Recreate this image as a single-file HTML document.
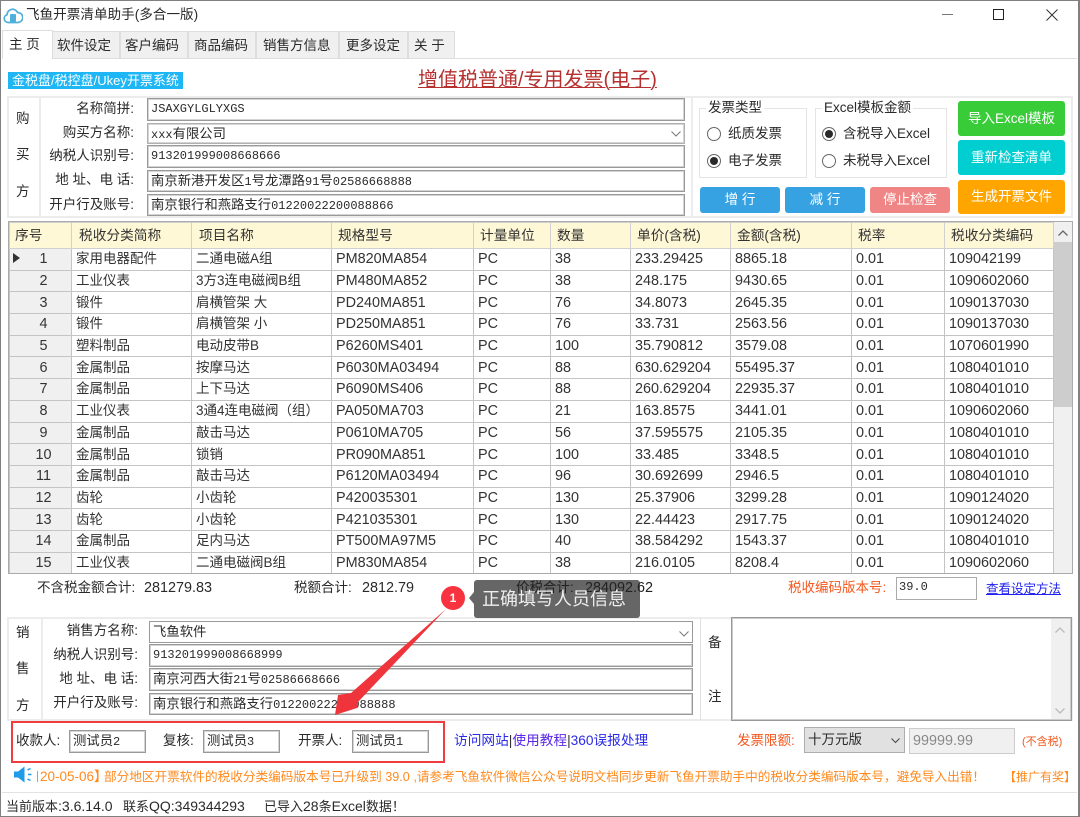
<!DOCTYPE html>
<html lang="zh"><head><meta charset="utf-8"><title>飞鱼开票清单助手(多合一版)</title>
<style>
html,body{margin:0;padding:0;background:#fff}
#w{position:relative;width:1080px;height:817px;overflow:hidden;background:#fff;font:13.5px/18px "Liberation Sans","Noto Sans CJK SC",sans-serif;color:#2a2a2a}
#w div,#w span.a{position:absolute;box-sizing:border-box;white-space:nowrap}
.tab{top:31px;height:27px;background:#f0f0f0;border:1px solid #dedede;border-bottom:0;line-height:28px;font-size:13.5px}
.l{text-align:right;font-size:13.5px}
.f{background:#fff;border:1px solid #999;box-shadow:inset 0 0 0 1px #d4d4d4;font:12px/20px "Liberation Mono","Noto Sans CJK SC",monospace;padding:0 3px;color:#2a2a2a}
.c{font-size:13.35px;font-family:"Liberation Sans","Noto Sans CJK SC",sans-serif}
.g{border:1px solid #e4e4e4;height:70px;top:108px}
.r{width:14px;height:14px;border:1px solid #666;border-radius:50%;background:#fff}
.r.on:after{content:"";position:absolute;left:2px;top:2px;width:8px;height:8px;border-radius:50%;background:#2a2a2a}
.b{color:#fff;text-align:center;border-radius:3px;font-size:13.5px}
.n{font-size:14.4px}
table{border-collapse:collapse;table-layout:fixed;font-size:14.4px}
td,th{border:1px solid #c4c4c4;height:21.7px;padding:0 0 0 4px;font-weight:400;text-align:left;overflow:hidden;white-space:nowrap;box-sizing:border-box;line-height:16px;color:#333}
th{height:26px;background:#fff8d6;padding-left:6px;font-size:13.7px;border-color:#d0d0d0}
td:first-child{background:#f0f0f0;text-align:center;padding:0 0 0 6px;font-size:14.4px}
td:nth-child(2),td:nth-child(3){font-size:13.5px}
th:first-child{background:#fff8d6;text-align:left;padding-left:5px}
tr{height:21.7px}
.o{color:#f4581f}
</style></head><body><div id="w">
<div style="left:0;top:0;width:1080px;height:817px;border:1px solid #808080;border-right-width:2px"></div>
<svg style="position:absolute;left:3px;top:6px" width="20" height="19" viewBox="0 0 20 19"><path d="M5 16.500a4 4 0 0 1-1-7.800A5.500 5.500 0 0 1 14.500 6.500 5 5 0 0 1 15 16.500z" fill="none" stroke="#4fb0dc" stroke-width="1.700"/><rect x="7" y="8" width="6" height="8" rx="1" fill="#4fb0dc"/></svg>
<div style="left:26px;top:6px;font-size:13.6px;line-height:18px">飞鱼开票清单助手(多合一版)</div>
<div style="left:942px;top:14px;width:11px;height:1px;background:#777"></div>
<div style="left:993px;top:9px;width:11px;height:11px;border:1px solid #222"></div>
<svg style="position:absolute;left:1046px;top:9px" width="12" height="12"><path d="M.5.500l11 11M11.500.500l-11 11" stroke="#333" fill="none"/></svg>

<div style="left:2px;top:58px;width:1075px;height:1px;background:#dedede"></div>
<div class="tab" style="left:2px;top:30px;width:51px;height:29px;background:#fff;z-index:2;line-height:27px;padding-left:6px">主 页</div>
<div class="tab" style="left:52px;width:68px;padding-left:4px">软件设定</div>
<div class="tab" style="left:120px;width:68px;padding-left:4px">客户编码</div>
<div class="tab" style="left:188px;width:68px;padding-left:5px">商品编码</div>
<div class="tab" style="left:256px;width:83px;padding-left:6px">销售方信息</div>
<div class="tab" style="left:339px;width:69px;padding-left:6px">更多设定</div>
<div class="tab" style="left:408px;width:47px;padding-left:5px">关 于</div>

<div style="left:8px;top:72px;width:175px;height:17px;background:#1eb6f5;color:#fff;font-size:13px;line-height:17px;padding-left:4px">金税盘/税控盘/Ukey开票系统</div>
<div style="left:418px;top:67px;font-size:20px;line-height:26px;color:#b5302f;text-decoration:underline;text-decoration-thickness:1px">增值税普通/专用发票(电子)</div>

<!-- buyer -->
<div style="left:7px;top:96px;width:1066px;height:122px;border:2px solid #ececec"></div>
<div style="left:39px;top:97px;width:2px;height:120px;background:#ececec"></div>
<div style="left:691px;top:97px;width:2px;height:120px;background:#ececec"></div>
<div style="left:16px;top:110px">购</div><div style="left:16px;top:146px">买</div><div style="left:16px;top:183px">方</div>
<div class="l" style="left:40px;top:100px;width:94px">名称简拼:</div>
<div class="l" style="left:40px;top:124px;width:94px">购买方名称:</div>
<div class="l" style="left:40px;top:147px;width:94px">纳税人识别号:</div>
<div class="l" style="left:40px;top:171px;width:94px">地 址、电 话:</div>
<div class="l" style="left:40px;top:196px;width:94px">开户行及账号:</div>
<div class="f" style="left:147px;top:98px;width:538px;height:23px">JSAXGYLGLYXGS</div>
<div class="f" style="left:147px;top:123px;width:538px;height:21px;line-height:19px;border-color:#b0b0b0">xxx<span class="c">有限公司</span></div>
<svg style="position:absolute;left:671px;top:131px" width="10" height="6"><path d="M.5.500l4.500 4.500 4.500-4.500" fill="none" stroke="#777"/></svg>
<div class="f" style="left:147px;top:145px;width:538px;height:23px">913201999008668666</div>
<div class="f" style="left:147px;top:170px;width:538px;height:22px;line-height:20px"><span class="c">南京新港开发区</span>1<span class="c">号龙潭路</span>91<span class="c">号</span>02586668888</div>
<div class="f" style="left:147px;top:194px;width:538px;height:22px;line-height:20px"><span class="c">南京银行和燕路支行</span>01220022200088866</div>

<div class="g" style="left:699px;width:108px"></div>
<div style="left:706px;top:99px;background:#fff;padding:0 2px">发票类型</div>
<div class="r" style="left:707px;top:127px"></div><div style="left:728px;top:125px">纸质发票</div>
<div class="r on" style="left:707px;top:154px"></div><div style="left:728px;top:152px">电子发票</div>
<div class="g" style="left:815px;width:132px"></div>
<div style="left:822px;top:99px;background:#fff;padding:0 2px">Excel模板金额</div>
<div class="r on" style="left:822px;top:127px"></div><div style="left:843px;top:125px">含税导入Excel</div>
<div class="r" style="left:822px;top:154px"></div><div style="left:843px;top:152px">未税导入Excel</div>
<div class="b" style="left:700px;top:187px;width:80px;height:26px;background:#36a2e2;line-height:26px">增 行</div>
<div class="b" style="left:785px;top:187px;width:80px;height:26px;background:#36a2e2;line-height:26px">减 行</div>
<div class="b" style="left:870px;top:187px;width:80px;height:26px;background:#f08585;line-height:26px">停止检查</div>
<div class="b" style="left:958px;top:101px;width:107px;height:35px;background:#38cc38;line-height:35px">导入Excel模板</div>
<div class="b" style="left:958px;top:140px;width:107px;height:35px;background:#00ced1;line-height:35px">重新检查清单</div>
<div class="b" style="left:958px;top:180px;width:107px;height:34px;background:#ffa500;line-height:34px">生成开票文件</div>

<!-- grid -->
<div style="left:8px;top:221px;width:1065px;height:353px;border:1px solid #aaa;overflow:hidden;background:#fff">
<table style="position:absolute;left:0;top:0;width:1044px">
<colgroup><col style="width:62px"><col style="width:120px"><col style="width:140px"><col style="width:142px"><col style="width:77px"><col style="width:80px"><col style="width:100px"><col style="width:121px"><col style="width:93px"><col style="width:109px"></colgroup>
<tr style="height:26px"><th>序号</th><th style="padding-left:7px">税收分类简称</th><th style="padding-left:7px">项目名称</th><th>规格型号</th><th>计量单位</th><th>数量</th><th>单价(含税)</th><th>金额(含税)</th><th>税率</th><th>税收分类编码</th></tr>
<tr><td>1</td><td>家用电器配件</td><td>二通电磁A组</td><td>PM820MA854</td><td>PC</td><td>38</td><td>233.29425</td><td>8865.18</td><td>0.01</td><td>109042199</td></tr>
<tr><td>2</td><td>工业仪表</td><td>3方3连电磁阀B组</td><td>PM480MA852</td><td>PC</td><td>38</td><td>248.175</td><td>9430.65</td><td>0.01</td><td>1090602060</td></tr>
<tr><td>3</td><td>锻件</td><td>肩横管架 大</td><td>PD240MA851</td><td>PC</td><td>76</td><td>34.8073</td><td>2645.35</td><td>0.01</td><td>1090137030</td></tr>
<tr><td>4</td><td>锻件</td><td>肩横管架 小</td><td>PD250MA851</td><td>PC</td><td>76</td><td>33.731</td><td>2563.56</td><td>0.01</td><td>1090137030</td></tr>
<tr><td>5</td><td>塑料制品</td><td>电动皮带B</td><td>P6260MS401</td><td>PC</td><td>100</td><td>35.790812</td><td>3579.08</td><td>0.01</td><td>1070601990</td></tr>
<tr><td>6</td><td>金属制品</td><td>按摩马达</td><td>P6030MA03494</td><td>PC</td><td>88</td><td>630.629204</td><td>55495.37</td><td>0.01</td><td>1080401010</td></tr>
<tr><td>7</td><td>金属制品</td><td>上下马达</td><td>P6090MS406</td><td>PC</td><td>88</td><td>260.629204</td><td>22935.37</td><td>0.01</td><td>1080401010</td></tr>
<tr><td>8</td><td>工业仪表</td><td>3通4连电磁阀（组）</td><td>PA050MA703</td><td>PC</td><td>21</td><td>163.8575</td><td>3441.01</td><td>0.01</td><td>1090602060</td></tr>
<tr><td>9</td><td>金属制品</td><td>敲击马达</td><td>P0610MA705</td><td>PC</td><td>56</td><td>37.595575</td><td>2105.35</td><td>0.01</td><td>1080401010</td></tr>
<tr><td>10</td><td>金属制品</td><td>锁销</td><td>PR090MA851</td><td>PC</td><td>100</td><td>33.485</td><td>3348.5</td><td>0.01</td><td>1080401010</td></tr>
<tr><td>11</td><td>金属制品</td><td>敲击马达</td><td>P6120MA03494</td><td>PC</td><td>96</td><td>30.692699</td><td>2946.5</td><td>0.01</td><td>1080401010</td></tr>
<tr><td>12</td><td>齿轮</td><td>小齿轮</td><td>P420035301</td><td>PC</td><td>130</td><td>25.37906</td><td>3299.28</td><td>0.01</td><td>1090124020</td></tr>
<tr><td>13</td><td>齿轮</td><td>小齿轮</td><td>P421035301</td><td>PC</td><td>130</td><td>22.44423</td><td>2917.75</td><td>0.01</td><td>1090124020</td></tr>
<tr><td>14</td><td>金属制品</td><td>足内马达</td><td>PT500MA97M5</td><td>PC</td><td>40</td><td>38.584292</td><td>1543.37</td><td>0.01</td><td>1080401010</td></tr>
<tr><td>15</td><td>工业仪表</td><td>二通电磁阀B组</td><td>PM830MA854</td><td>PC</td><td>38</td><td>216.0105</td><td>8208.4</td><td>0.01</td><td>1090602060</td></tr>
</table>
<div style="left:4px;top:31px;width:0;height:0;border-left:7px solid #333;border-top:5px solid transparent;border-bottom:5px solid transparent"></div>
<div style="left:1045px;top:0;width:18px;height:351px;background:#f0f0f0"></div>
<svg style="position:absolute;left:1049px;top:8px" width="10" height="6"><path d="M.5 5.500l4.500-4.500 4.500 4.500" fill="none" stroke="#666" stroke-width="1.300"/></svg>
<div style="left:1045px;top:20px;width:18px;height:165px;background:#cdcdcd"></div>
</div>

<!-- totals -->
<div style="left:37px;top:579px">不含税金额合计:</div><div class="n" style="left:144px;top:579px">281279.83</div>
<div style="left:294px;top:579px">税额合计:</div><div class="n" style="left:362px;top:579px">2812.79</div>
<div class="o" style="left:788px;top:579px">税收编码版本号:</div>
<div class="f" style="left:896px;top:577px;width:81px;height:23px;border-color:#aaa;box-shadow:none;line-height:18px;padding-left:2px">39.0</div>
<div style="left:986px;top:580px;font-size:12.500px;color:#2020f0;text-decoration:underline;text-decoration-thickness:1px">查看设定方法</div>

<!-- seller -->
<div style="left:7px;top:617px;width:1066px;height:104px;border:2px solid #ececec"></div>
<div style="left:41px;top:618px;width:2px;height:102px;background:#ececec"></div>
<div style="left:700px;top:618px;width:1px;height:102px;background:#e0e0e0"></div>
<div style="left:16px;top:624px">销</div><div style="left:16px;top:660px">售</div><div style="left:16px;top:697px">方</div>
<div class="l" style="left:42px;top:622px;width:96px">销售方名称:</div>
<div class="l" style="left:42px;top:646px;width:96px">纳税人识别号:</div>
<div class="l" style="left:42px;top:670px;width:96px">地 址、电 话:</div>
<div class="l" style="left:42px;top:694px;width:96px">开户行及账号:</div>
<div class="f" style="left:149px;top:621px;width:544px;height:22px;line-height:20px;box-shadow:none"><span class="c">飞鱼软件</span></div>
<svg style="position:absolute;left:679px;top:631px" width="10" height="6"><path d="M.5.500l4.500 4.500 4.500-4.500" fill="none" stroke="#777"/></svg>
<div class="f" style="left:149px;top:644px;width:544px;height:23px">913201999008668999</div>
<div class="f" style="left:149px;top:668px;width:544px;height:23px"><span class="c">南京河西大街</span>21<span class="c">号</span>02586668666</div>
<div class="f" style="left:149px;top:693px;width:544px;height:22px;line-height:20px"><span class="c">南京银行和燕路支行</span>01220022200088888</div>
<div style="left:708px;top:634px">备</div><div style="left:708px;top:688px">注</div>
<div style="left:731px;top:617px;width:341px;height:104px;border:1px solid #999;box-shadow:inset 0 0 0 1px #ccc;background:#fff"></div>
<div style="left:1051px;top:619px;width:19px;height:100px;background:#f0f0f0"></div>
<svg style="position:absolute;left:1055px;top:627px" width="10" height="6"><path d="M.5 5.500l4.500-4.500 4.500 4.500" fill="none" stroke="#bbb" stroke-width="1.300"/></svg>
<svg style="position:absolute;left:1055px;top:708px" width="10" height="6"><path d="M.5.500l4.500 4.500 4.500-4.500" fill="none" stroke="#bbb" stroke-width="1.300"/></svg>

<!-- staff -->
<div style="left:16px;top:732px">收款人:</div>
<div class="f" style="left:69px;top:730px;width:77px;height:23px;line-height:20px"><span class="c">测试员</span>2</div>
<div style="left:163px;top:732px">复核:</div>
<div class="f" style="left:203px;top:730px;width:77px;height:23px;line-height:20px"><span class="c">测试员</span>3</div>
<div style="left:298px;top:732px">开票人:</div>
<div class="f" style="left:352px;top:730px;width:77px;height:23px;line-height:20px"><span class="c">测试员</span>1</div>
<div style="left:454px;top:732px;font-size:13.7px;color:#2a2ae8">访问网站<span style="color:#333">|</span><span style="color:#5a28e8">使用教程</span><span style="color:#333">|</span>360误报处理</div>
<div class="o" style="left:737px;top:732px">发票限额:</div>
<div style="left:804px;top:727px;width:101px;height:26px;background:#e1e1e1;border:1px solid #adadad;line-height:24px;padding-left:3px">十万元版</div>
<svg style="position:absolute;left:891px;top:738px" width="9" height="6"><path d="M.5.500l4 4 4-4" fill="none" stroke="#444"/></svg>
<div class="n" style="left:909px;top:728px;width:106px;height:26px;background:#f0f0f0;border:1px solid #ccc;line-height:24px;padding-left:3px;color:#888">99999.99</div>
<div class="o" style="left:1022px;top:733px;font-size:11px">(不含税)</div>

<!-- marquee -->
<svg style="position:absolute;left:13px;top:766px" width="20" height="18"><path d="M1 5.500h4l6.500-5v16l-6.500-5H1z" fill="#1f9be8"/><path d="M14.500 4l3-1.500M15 8.500h3.500M14.500 13l3 1.500" stroke="#1f9be8" stroke-width="1.500" fill="none"/></svg>
<div style="left:37px;top:771px;width:1px;height:11px;background:#ff8a1e"></div>
<div style="left:40px;top:767px;color:#ff8a1e;font-size:13.5px;line-height:20px">20-05-06】</div>
<div style="left:104px;top:767px;color:#ff8a1e;font-size:12.630px;line-height:20px">部分地区开票软件的税收分类编码版本号已升级到 39.0 ,请参考飞鱼软件微信公众号说明文档同步更新飞鱼开票助手中的税收分类编码版本号，避免导入出错！</div>
<div style="left:1004px;top:767px;color:#ff8a1e;font-size:12px;line-height:20px">【推广有奖】</div>
<div style="left:2px;top:792px;width:1075px;height:1px;background:#e2e2e2"></div>
<div style="left:6px;top:797px;font-size:14px"><span style="font-size:13px">当前版本</span>:3.6.14.0</div>
<div style="left:123px;top:797px;font-size:14px"><span style="font-size:13px">联系</span>QQ:349344293</div>
<div style="left:264px;top:797px;font-size:14px"><span style="font-size:13px">已导入</span>28<span style="font-size:13px">条</span>Excel<span style="font-size:13px">数据！</span></div>

<!-- annotations -->
<div style="left:11px;top:721px;width:434px;height:42px;border:2.500px solid #f03c3c"></div>
<svg style="position:absolute;left:0;top:0" width="1080" height="817"><path d="M446 609 351 693 338 695 335 715 357 708 358 702z" fill="#f0343c"/><circle cx="453" cy="598" r="12" fill="#f7333f"/><path d="M474 592l-5 6 5 6z" fill="#666"/></svg>
<div style="left:445px;top:590px;width:16px;text-align:center;color:#fff;font-size:12px;font-weight:700;line-height:16px">1</div>
<div style="left:474px;top:580px;width:166px;height:38px;background:#666;border-radius:3px"></div>
<div style="left:516px;top:579px;color:#222">价税合计:</div><div class="n" style="left:585px;top:579px;color:#222">284092.62</div>
<div style="left:482px;top:580px;color:#eee;font-size:18px;line-height:38px">正确填写人员信息</div>
</div></body></html>
